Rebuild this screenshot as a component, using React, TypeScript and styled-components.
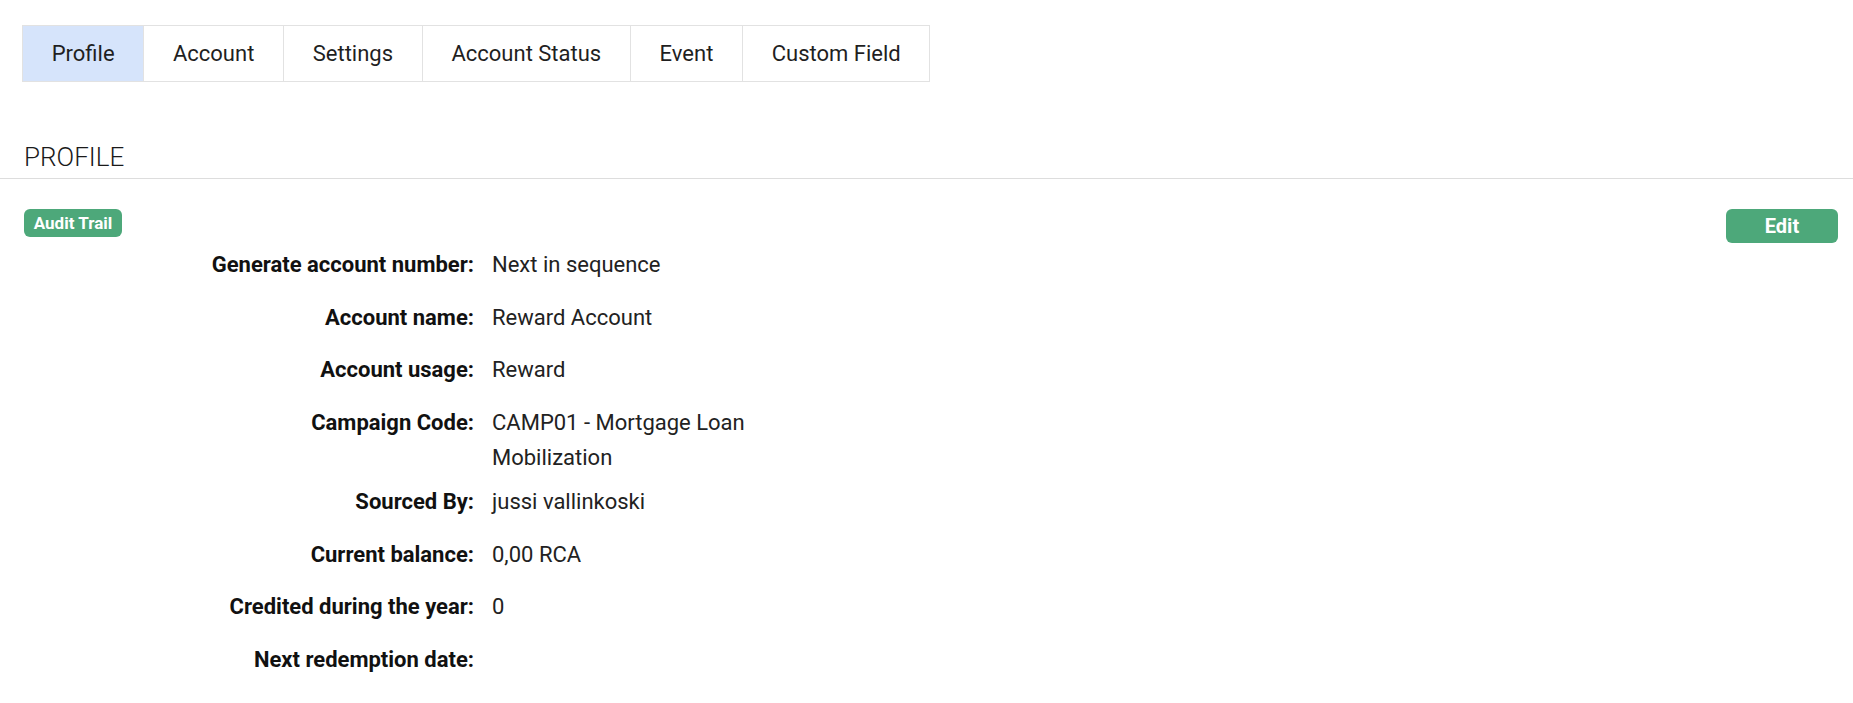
import styled, { createGlobalStyle } from 'styled-components';

const GlobalStyle = createGlobalStyle`
  body {
    margin: 0;
    background: #ffffff;
    font-family: Roboto, "Liberation Sans", Arial, sans-serif;
    color: #222222;
  }
`;

const Page = styled.div`
  display: flex;
  flex-direction: column;
  min-height: 703px;
`;

const TabBar = styled.div`
  display: flex;
  padding: 25px 0 0 22px;
`;

const Tabs = styled.div`
  display: flex;
  border: 1px solid #e2e2e2;
`;

const Tab = styled.div<{ $active?: boolean }>`
  display: flex;
  align-items: center;
  height: 55px;
  padding: 0 28.7px;
  font-size: 22px;
  color: #1f1f1f;
  background: ${(p) => (p.$active ? '#d6e4fb' : '#ffffff')};
  border-left: 1px solid ${(p) => (p.$active ? '#d6e4fb' : '#e2e2e2')};
  cursor: pointer;
  &:first-child {
    border-left: none;
  }
`;

const SectionTitle = styled.h2`
  margin: 60px 0 0;
  padding: 0 24px 5px;
  font-size: 26px;
  line-height: 31px;
  font-weight: 300;
  color: #1a1a1a;
  border-bottom: 1px solid #dddddd;
`;

const Toolbar = styled.div`
  display: flex;
  justify-content: space-between;
  align-items: flex-start;
  padding: 30px 15px 0 24px;
`;

const Button = styled.button<{ $size?: 'sm' | 'md' }>`
  border: none;
  border-radius: 6px;
  background: #4da87a;
  color: #ffffff;
  font-family: inherit;
  font-weight: 700;
  cursor: pointer;
  padding: 0;
  height: ${(p) => (p.$size === 'md' ? '34px' : '28px')};
  width: ${(p) => (p.$size === 'md' ? '112px' : '98px')};
  font-size: ${(p) => (p.$size === 'md' ? '20px' : '17px')};
`;

const Details = styled.div`
  display: flex;
  flex-direction: column;
  margin-top: 4px;
`;

const Row = styled.div`
  display: flex;
  min-height: 43px;
  margin-bottom: 9.5px;
  font-size: 22px;
  line-height: 35px;
`;

const Label = styled.div`
  width: 474px;
  flex-shrink: 0;
  text-align: right;
  font-weight: 700;
  color: #111111;
`;

const Value = styled.div`
  width: 300px;
  margin-left: 18px;
  color: #222222;
`;

const tabs = ['Profile', 'Account', 'Settings', 'Account Status', 'Event', 'Custom Field'];

const fields: [string, string][] = [
  ['Generate account number:', 'Next in sequence'],
  ['Account name:', 'Reward Account'],
  ['Account usage:', 'Reward'],
  ['Campaign Code:', 'CAMP01 - Mortgage Loan Mobilization'],
  ['Sourced By:', 'jussi vallinkoski'],
  ['Current balance:', '0,00 RCA'],
  ['Credited during the year:', '0'],
  ['Next redemption date:', ''],
];

const App: React.FC = () => (
  <Page>
    <GlobalStyle />
    <TabBar>
      <Tabs>
        {tabs.map((t, i) => (
          <Tab key={t} $active={i === 0}>
            {t}
          </Tab>
        ))}
      </Tabs>
    </TabBar>
    <SectionTitle>PROFILE</SectionTitle>
    <Toolbar>
      <Button>Audit Trail</Button>
      <Button $size="md">Edit</Button>
    </Toolbar>
    <Details>
      {fields.map(([label, value]) => (
        <Row key={label}>
          <Label>{label}</Label>
          <Value>{value}</Value>
        </Row>
      ))}
    </Details>
  </Page>
);

export default App;
